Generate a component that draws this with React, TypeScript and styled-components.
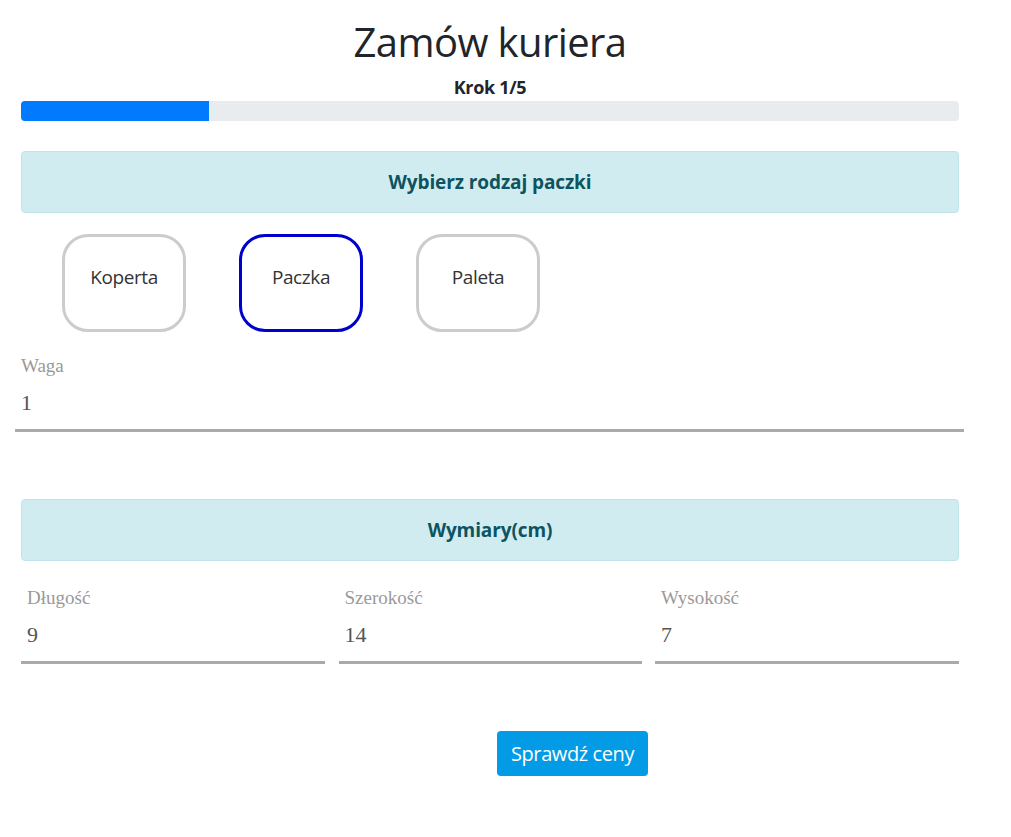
import React from "react";
import styled, { createGlobalStyle } from "styled-components";

const Global = createGlobalStyle`
  html, body { margin: 0; padding: 0; background: #fff; }
  body { font-family: "Open Sans", "Noto Sans", sans-serif; color: #212529; }
`;

const Page = styled.div`
  width: 938px;
  margin-left: 21px;
  display: flex;
  flex-direction: column;
`;

const Title = styled.h1`
  margin: 16px 0 0;
  font-family: "Open Sans", sans-serif;
  font-weight: 500;
  font-size: 40px;
  line-height: 52px;
  letter-spacing: -0.6px;
  text-align: center;
  color: #212529;
`;

const Step = styled.div`
  margin-top: 8px;
  font-weight: 700;
  font-size: 18px;
  line-height: 22px;
  letter-spacing: -0.3px;
  text-align: center;
`;

const Progress = styled.div`
  margin-top: 3px;
  height: 20px;
  background: #e9ecef;
  border-radius: 4px;
  overflow: hidden;
  display: flex;
`;

const ProgressFill = styled.div`
  height: 100%;
  background: #007bff;
`;

const Alert = styled.div<{ $top: number }>`
  margin-top: ${(p) => p.$top}px;
  height: 62px;
  box-sizing: border-box;
  border: 1px solid #bee5eb;
  border-radius: 4px;
  background: #d1ecf1;
  color: #0c5460;
  font-weight: 700;
  font-size: 19px;
  letter-spacing: -0.1px;
  display: flex;
  align-items: center;
  justify-content: center;
`;

const Choices = styled.div`
  margin-top: 21px;
  padding-left: 41px;
  display: flex;
  gap: 53px;
`;

const Choice = styled.div<{ $active?: boolean }>`
  width: 124px;
  height: 98px;
  box-sizing: border-box;
  border: 3px solid ${(p) => (p.$active ? "#0000cd" : "#cccccc")};
  border-radius: 26px;
  padding-top: 27px;
  text-align: center;
  font-size: 19px;
  line-height: 26px;
  color: #333;
  letter-spacing: -0.4px;
`;

const Field = styled.div<{ $wide?: boolean }>`
  display: flex;
  flex-direction: column;
  ${(p) => (p.$wide ? "margin: 24px -5px 0 -6px; padding-left: 6px;" : "padding-left: 6px;")}
  border-bottom: 3px solid #aaaaaa;
`;

const Label = styled.div`
  font-family: "Liberation Serif", serif;
  font-size: 19px;
  line-height: 20px;
  color: #999;
`;

const Value = styled.div`
  margin-top: 15px;
  margin-bottom: 14px;
  font-family: "Liberation Serif", serif;
  font-size: 22px;
  line-height: 24px;
  color: #555;
`;

const DimRow = styled.div`
  margin-top: 27px;
  display: grid;
  grid-template-columns: 304px 303px 304px;
  column-gap: 13.5px;
`;

const Button = styled.button`
  margin: 67px 0 0 476px;
  width: 151px;
  height: 45px;
  border: none;
  border-radius: 4px;
  background: #039be5;
  color: #fff;
  font-family: "Open Sans", sans-serif;
  font-size: 20px;
  letter-spacing: -0.4px;
  cursor: pointer;
`;

export default function App() {
  const kinds = [
    { name: "Koperta", active: false },
    { name: "Paczka", active: true },
    { name: "Paleta", active: false },
  ];
  const dims = [
    { label: "Długość", value: "9" },
    { label: "Szerokość", value: "14" },
    { label: "Wysokość", value: "7" },
  ];
  return (
    <>
      <Global />
      <Page>
        <Title>Zamów kuriera</Title>
        <Step>Krok 1/5</Step>
        <Progress>
          <ProgressFill style={{ width: "20%" }} />
        </Progress>
        <Alert $top={30}>Wybierz rodzaj paczki</Alert>
        <Choices>
          {kinds.map((k) => (
            <Choice key={k.name} $active={k.active}>
              {k.name}
            </Choice>
          ))}
        </Choices>
        <Field $wide>
          <Label>Waga</Label>
          <Value>1</Value>
        </Field>
        <Alert $top={67}>Wymiary(cm)</Alert>
        <DimRow>
          {dims.map((d) => (
            <Field key={d.label}>
              <Label>{d.label}</Label>
              <Value>{d.value}</Value>
            </Field>
          ))}
        </DimRow>
        <Button>Sprawdź ceny</Button>
      </Page>
    </>
  );
}
